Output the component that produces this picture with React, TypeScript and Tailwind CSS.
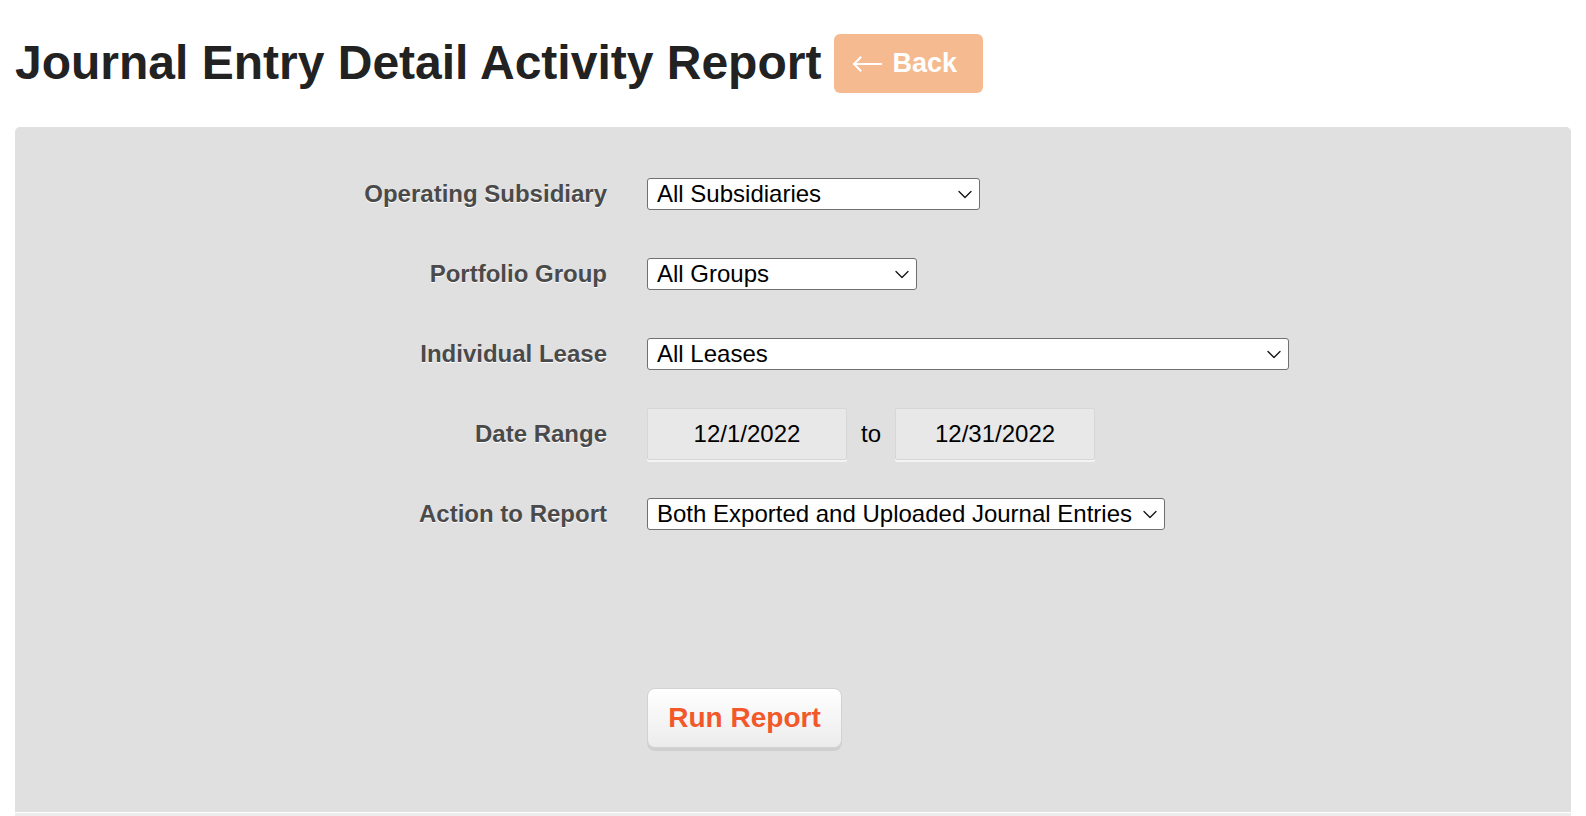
import React from "react";

function Chevron() {
  return (
    <svg width="14" height="9" viewBox="0 0 14 9" className="shrink-0">
      <path d="M1 1.5 L7 7.5 L13 1.5" fill="none" stroke="#111" strokeWidth="1.3" strokeLinecap="round" strokeLinejoin="round" />
    </svg>
  );
}

function FakeSelect({ value, width }: { value: string; width: string }) {
  return (
    <div
      className={`${width} h-[32px] flex items-center justify-between bg-white border border-[#707070] rounded-[3px] pl-[9px] pr-[7px] text-[24px] leading-none text-black`}
    >
      <span className="whitespace-nowrap">{value}</span>
      <Chevron />
    </div>
  );
}

function Label({ children }: { children: React.ReactNode }) {
  return (
    <div className="flex items-center justify-end h-[80px] text-[24px] font-bold text-[#4a4a4a] [text-shadow:0_1px_0_#ffffff]">
      {children}
    </div>
  );
}

function DateBox({ value }: { value: string }) {
  return (
    <div className="w-[200px] h-[52px] flex items-center justify-center bg-[#e8e8e8] border border-[#d6d6d6] rounded-[2px] shadow-[0_2px_0_#f4f4f4] text-[24px] text-black">
      {value}
    </div>
  );
}

export default function App() {
  return (
    <div className="w-[1586px] h-[816px] bg-white overflow-hidden font-['Liberation_Sans',Arial,sans-serif]">
      <div className="h-[127px] flex items-center pl-[15px] pb-[1px]">
        <h1 className="text-[48px] font-bold text-[#222222] leading-none tracking-normal">
          Journal Entry Detail Activity Report
        </h1>
        <div className="ml-[13px] w-[149px] h-[59px] rounded-[6px] bg-[#f5ba8f] flex items-center pl-[18px] text-white text-[27px] font-bold leading-none">
          <svg width="30" height="16" viewBox="0 0 30 16" className="mr-[10px] mt-[1px] shrink-0">
            <path d="M2 8 L29 8" stroke="#ffffff" strokeWidth="2" strokeLinecap="square" />
            <path d="M8.5 1.5 L2 8 L8.5 14.5" fill="none" stroke="#ffffff" strokeWidth="2" strokeLinecap="square" strokeLinejoin="miter" />
          </svg>
          <span>Back</span>
        </div>
      </div>
      <div className="mx-[15px] h-[685px] bg-[#e0e0e0] rounded-t-[5px] pt-[27px]">
        <div className="grid grid-cols-[592px_1fr] gap-x-[40px]">
          <Label>Operating Subsidiary</Label>
          <div className="h-[80px] flex items-center">
            <FakeSelect value="All Subsidiaries" width="w-[333px]" />
          </div>
          <Label>Portfolio Group</Label>
          <div className="h-[80px] flex items-center">
            <FakeSelect value="All Groups" width="w-[270px]" />
          </div>
          <Label>Individual Lease</Label>
          <div className="h-[80px] flex items-center">
            <FakeSelect value="All Leases" width="w-[642px]" />
          </div>
          <Label>Date Range</Label>
          <div className="h-[80px] flex items-center">
            <DateBox value="12/1/2022" />
            <span className="ml-[14px] mr-[14px] text-[24px] text-black">to</span>
            <DateBox value="12/31/2022" />
          </div>
          <Label>Action to Report</Label>
          <div className="h-[80px] flex items-center">
            <FakeSelect value="Both Exported and Uploaded Journal Entries" width="w-[518px]" />
          </div>
        </div>
        <div className="pl-[632px] pt-[134px]">
          <div className="w-[195px] h-[60px] rounded-[8px] border border-[#d2d2d2] bg-gradient-to-b from-white to-[#ececec] shadow-[0_3px_0_#cfcfcf] flex items-center justify-center text-[28px] font-bold text-[#f2582a]">
            Run Report
          </div>
        </div>
      </div>
      <div className="mx-[15px] mt-[1px] h-[3px] bg-[#ececec]" />
    </div>
  );
}
